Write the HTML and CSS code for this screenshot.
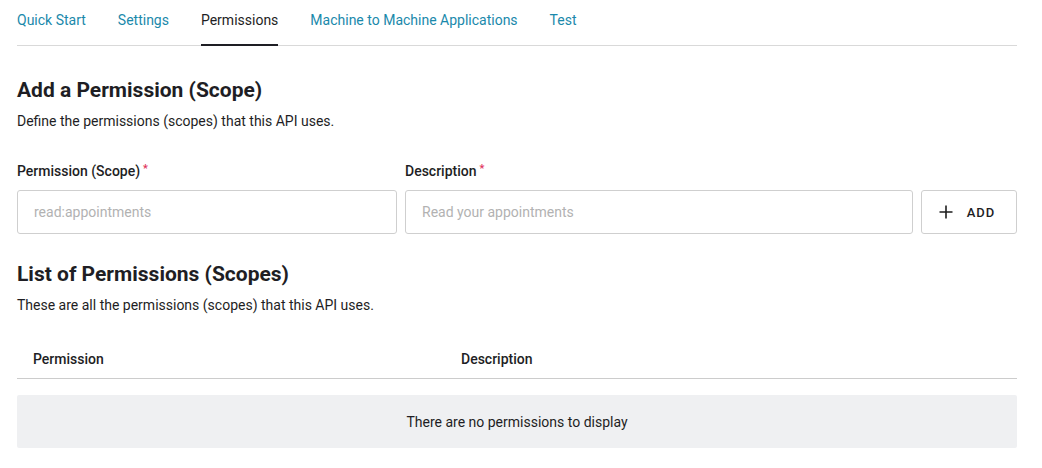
FILE: index.html
```html
<!DOCTYPE html>
<html lang="en">
<head>
<meta charset="utf-8">
<title>Permissions</title>
<link rel="stylesheet" href="styles.css">
</head>
<body>
<div class="page">
  <nav class="tabs">
    <a class="tab" href="#">Quick Start</a>
    <a class="tab" href="#">Settings</a>
    <a class="tab active" href="#">Permissions</a>
    <a class="tab" href="#">Machine to Machine Applications</a>
    <a class="tab" href="#">Test</a>
  </nav>

  <section class="add-section">
    <h2 class="title">Add a Permission (Scope)</h2>
    <p class="subtitle">Define the permissions (scopes) that this API uses.</p>
    <div class="form-row">
      <div class="field field-scope">
        <label class="label">Permission (Scope)<span class="req">*</span></label>
        <input class="input" type="text" placeholder="read:appointments">
      </div>
      <div class="field field-desc">
        <label class="label">Description<span class="req">*</span></label>
        <input class="input" type="text" placeholder="Read your appointments">
      </div>
      <button class="btn-add" type="button">
        <svg class="plus" width="14" height="14" viewBox="0 0 14 14" aria-hidden="true"><path d="M7 0.5V13.5M0.5 7H13.5" stroke="#1e1e1e" stroke-width="1.6" fill="none"/></svg>
        <span>ADD</span>
      </button>
    </div>
  </section>

  <section class="list-section">
    <h2 class="title">List of Permissions (Scopes)</h2>
    <p class="subtitle">These are all the permissions (scopes) that this API uses.</p>
    <div class="table-head">
      <div class="col col-perm">Permission</div>
      <div class="col col-desc">Description</div>
    </div>
    <div class="empty">There are no permissions to display</div>
  </section>
</div>
</body>
</html>
```

FILE: styles.css
```css
* { box-sizing: border-box; }

html, body {
  margin: 0;
  padding: 0;
  background: #ffffff;
}

body {
  font-family: Roboto, "Liberation Sans", Arial, sans-serif;
  color: #1e1e24;
  font-size: 14px;
  line-height: 20px;
}

.page {
  width: 1000px;
  margin-left: 17px;
}

.tabs {
  display: flex;
  gap: 32px;
  border-bottom: 1px solid #d9d9d9;
  height: 46px;
}

.tab {
  display: block;
  font-size: 14px;
  line-height: 20px;
  padding-top: 10px;
  height: 46px;
  color: #1a89ab;
  text-decoration: none;
  border-bottom: 2px solid transparent;
}

.tab.active {
  color: #1e1e24;
  border-bottom-color: #1e1e24;
}

.title {
  margin: 0;
  font-size: 21px;
  line-height: 28px;
  font-weight: 700;
  color: #1e1e24;
}

.subtitle {
  margin: 7px 0 0;
  font-size: 14px;
  line-height: 20px;
  color: #1e1e24;
}

.add-section {
  padding-top: 30px;
}

.form-row {
  display: flex;
  align-items: flex-end;
  gap: 8px;
  margin-top: 30px;
}

.field {
  display: flex;
  flex-direction: column;
  gap: 9px;
}

.field-scope { width: 380px; }
.field-desc { width: 508px; }

.label {
  font-size: 14px;
  line-height: 20px;
  font-weight: 500;
  color: #1e1e24;
}

.req {
  color: #e0315a;
  margin-left: 3px;
  font-size: 11px;
  vertical-align: top;
  position: relative;
  top: -2px;
}

.input {
  height: 44px;
  width: 100%;
  border: 1px solid #cfcfcf;
  border-radius: 3px;
  padding: 0 16px;
  font-family: inherit;
  font-size: 14px;
  color: #1e1e24;
  background: #fff;
  outline: none;
}

.input::placeholder {
  color: #b2b2b2;
}

.btn-add {
  width: 96px;
  height: 44px;
  border: 1px solid #cfcfcf;
  border-radius: 3px;
  background: #fff;
  display: flex;
  align-items: center;
  justify-content: center;
  gap: 14px;
  font-family: inherit;
  font-size: 13px;
  font-weight: 500;
  letter-spacing: 1px;
  color: #1e1e24;
  padding: 0 4px 0 0;
  cursor: pointer;
}

.plus { display: block; }

.list-section {
  padding-top: 26px;
}

.table-head {
  display: grid;
  grid-template-columns: 428px 1fr;
  margin-top: 24px;
  padding: 10px 0 9px;
  border-bottom: 1px solid #cccccc;
}

.col {
  padding-left: 16px;
  font-size: 14px;
  line-height: 20px;
  font-weight: 500;
  color: #1e1e24;
}

.empty {
  margin-top: 16px;
  height: 53px;
  background: #eff0f2;
  border-radius: 2px;
  display: flex;
  align-items: center;
  justify-content: center;
  font-size: 14px;
  color: #1e1e24;
}
```
